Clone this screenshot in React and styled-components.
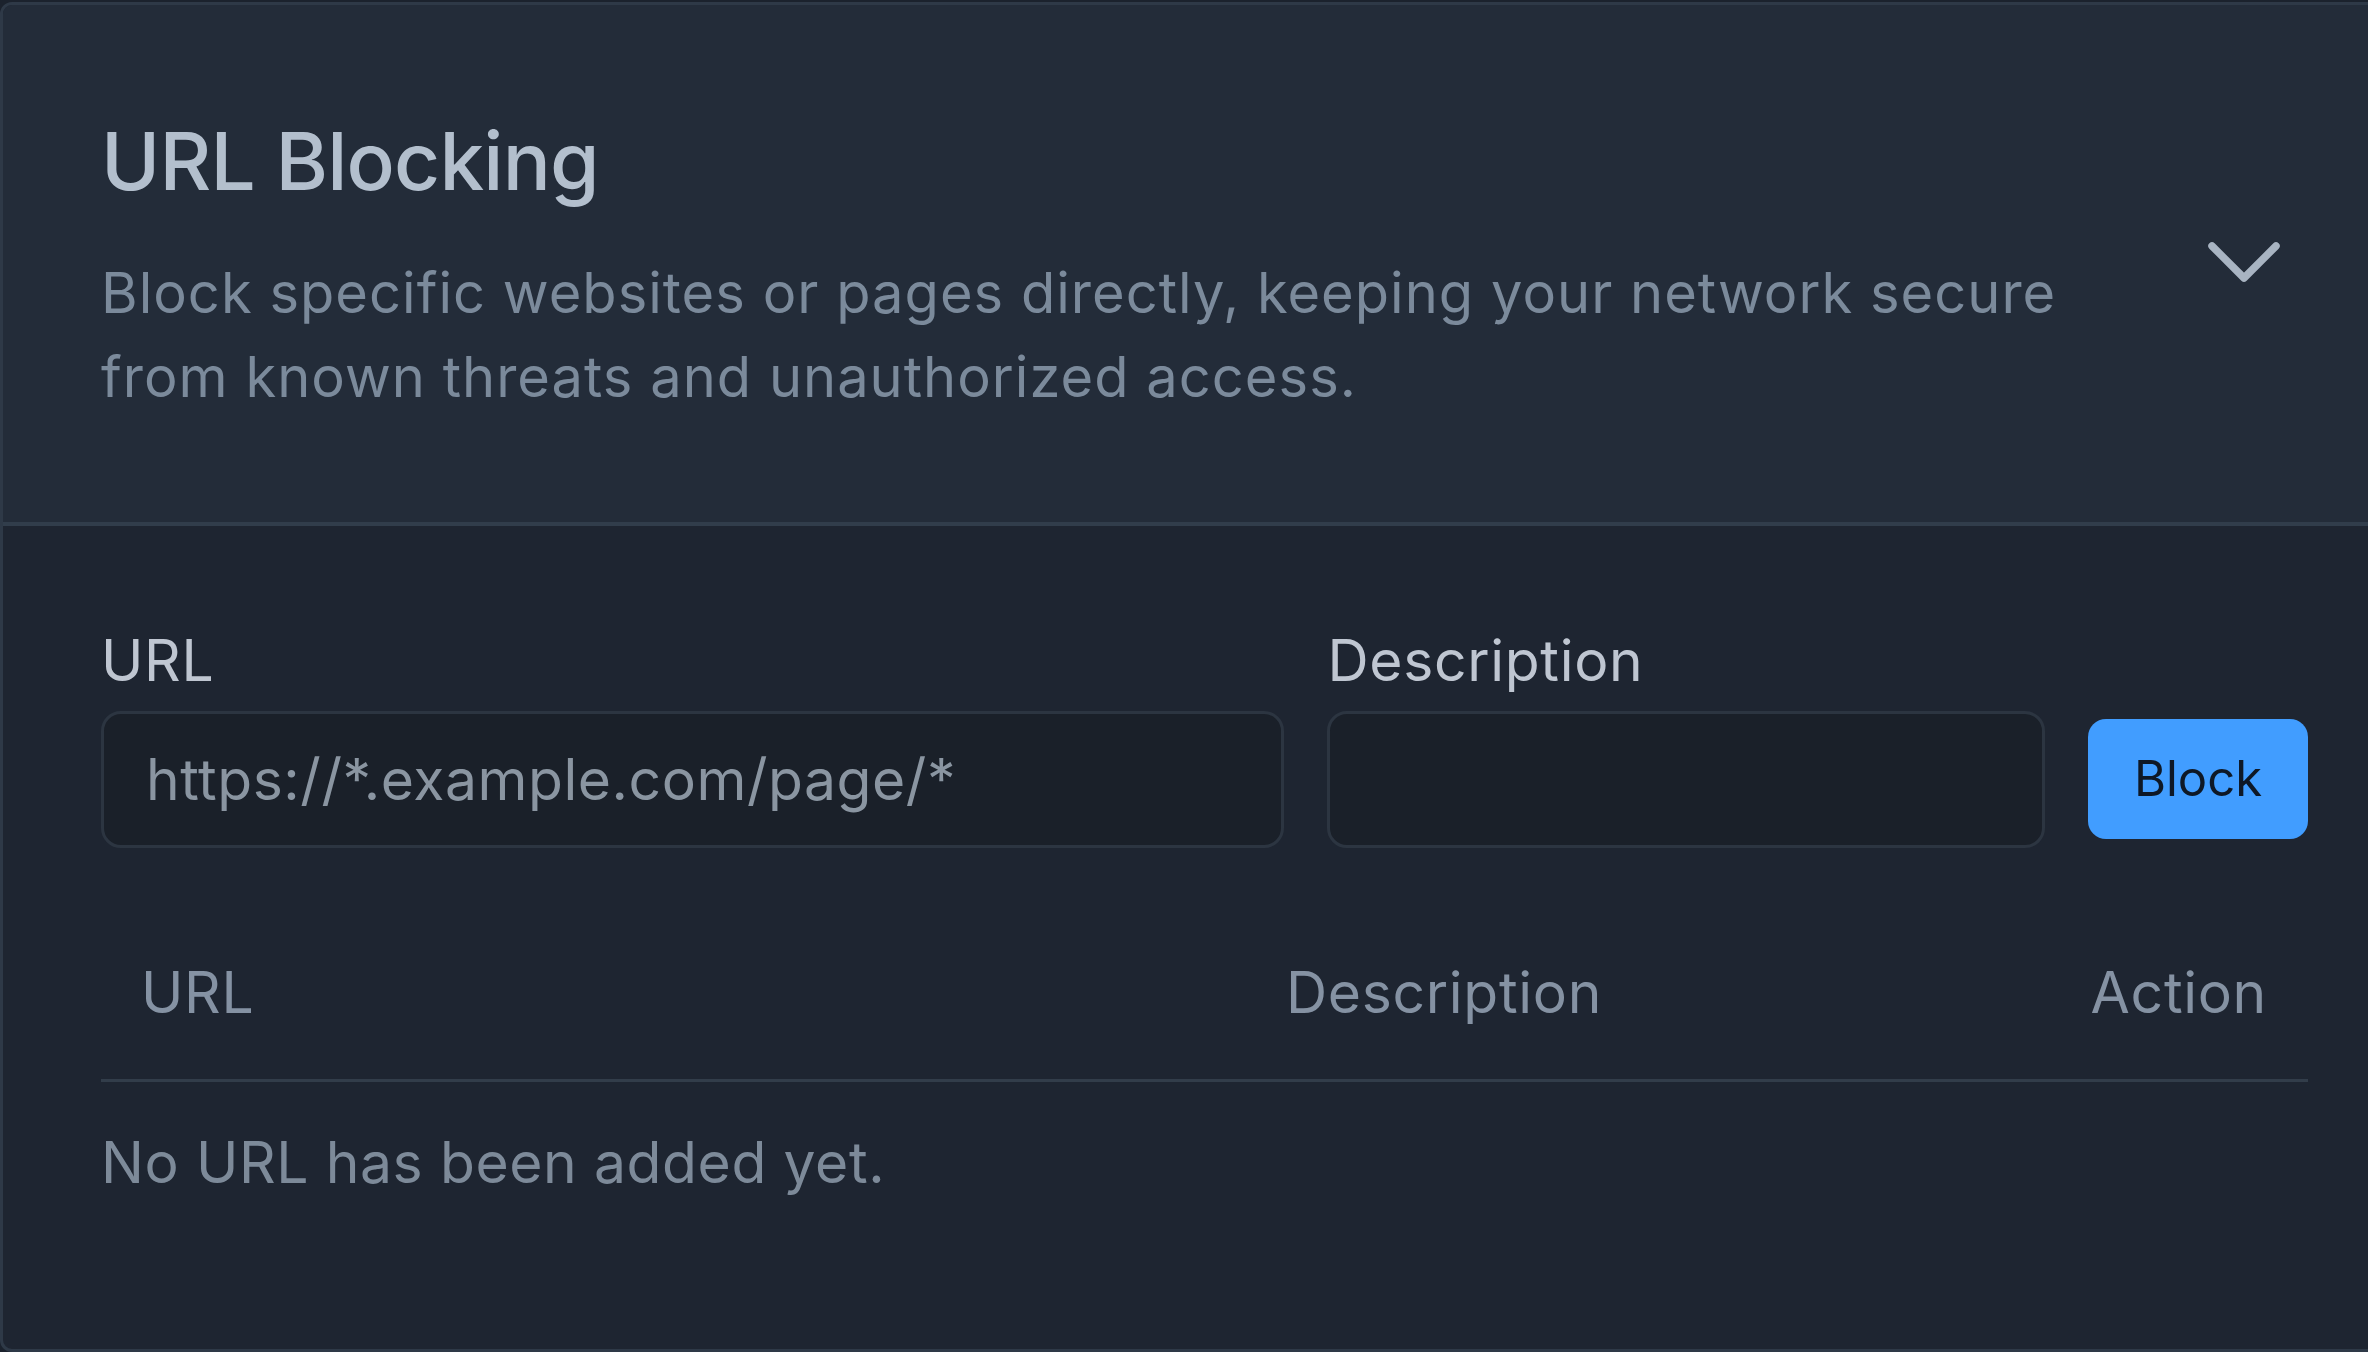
import React from "react";
import styled, { createGlobalStyle } from "styled-components";

const Global = createGlobalStyle`
  html, body {
    margin: 0;
    padding: 0;
    background: #1b222d;
    overflow: hidden;
  }
  body {
    font-family: Inter, "Noto Sans", "Liberation Sans", sans-serif;
  }
  * { box-sizing: border-box; }
`;

const Card = styled.section`
  margin-top: 2px;
  width: 2410px;
  height: 1350px;
  border: 3px solid #2e3947;
  border-radius: 12px;
  overflow: hidden;
  display: flex;
  flex-direction: column;
  background: #1e2531;
`;

const Header = styled.header`
  background: #232c39;
  border-bottom: 4px solid #313d4b;
  padding: 108px 99px 103px 98px;
  display: grid;
  grid-template-columns: 1fr 128px;
  column-gap: 60px;
  align-items: center;
`;

const HeaderText = styled.div`
  display: flex;
  flex-direction: column;
  gap: 42px;
`;

const Title = styled.h2`
  margin: 0;
  font-size: 80px;
  line-height: 96px;
  font-weight: 500;
  letter-spacing: -0.8px;
  color: #b3bfcd;
`;

const Subtitle = styled.p`
  margin: 0;
  font-size: 56px;
  line-height: 84px;
  font-weight: 400;
  letter-spacing: 1.03px;
  color: #7b8a9b;
`;

const ToggleButton = styled.button`
  width: 128px;
  height: 100px;
  padding: 0;
  border: none;
  background: transparent;
  display: flex;
  align-items: center;
  justify-content: center;
  cursor: pointer;
  margin-top: -8px;
`;

const Body = styled.div`
  flex: 1;
  padding: 92px 99px 0 98px;
`;

const FormGrid = styled.div`
  display: grid;
  grid-template-columns: 1184fr 718fr 220px;
  column-gap: 43px;
  row-gap: 8px;
  align-items: center;
`;

const Label = styled.label`
  font-size: 57px;
  line-height: 85px;
  letter-spacing: 0.7px;
  color: #bfc6d1;
  grid-column: ${(p) => p.$col};
`;

const Input = styled.input`
  width: 100%;
  height: 137px;
  border: 3px solid #2c3541;
  border-radius: 20px;
  background: #1a2029;
  padding: 0 40px 0 42px;
  font-family: inherit;
  font-size: 57px;
  letter-spacing: 0.55px;
  color: #c8ced6;
  outline: none;
  &::placeholder {
    color: #8a95a1;
    opacity: 1;
  }
`;

const BlockButton = styled.button`
  width: 220px;
  height: 120px;
  border: none;
  border-radius: 18px;
  background: #419dff;
  color: #0e1826;
  font-family: inherit;
  font-size: 49px;
  font-weight: 400;
  cursor: pointer;
  margin-top: -2px;
`;

const Table = styled.div`
  margin-top: 58px;
`;

const HeadRow = styled.div`
  display: grid;
  grid-template-columns: 1145px 1fr auto;
  border-bottom: 3px solid #323d4a;
`;

const HeadCell = styled.div`
  padding: 44px 41px 44px 40px;
  font-size: 57px;
  line-height: 85px;
  letter-spacing: 0.7px;
  color: #8592a3;
  text-align: ${(p) => p.$align || "left"};
`;

const Empty = styled.p`
  margin: 38px 0 0;
  font-size: 57px;
  line-height: 85px;
  letter-spacing: 0.6px;
  color: #7d8a99;
`;

const Chevron = () => (
  <svg width="76" height="44" viewBox="0 0 76 44" fill="none">
    <polyline
      points="6,6 38,38 70,6"
      stroke="#a8b4c2"
      strokeWidth="7.5"
      strokeLinecap="round"
      strokeLinejoin="round"
    />
  </svg>
);

export default function App() {
  return (
    <>
      <Global />
      <Card>
        <Header>
          <HeaderText>
            <Title>URL Blocking</Title>
            <Subtitle>
              Block specific websites or pages directly, keeping your network
              secure from known threats and unauthorized access.
            </Subtitle>
          </HeaderText>
          <ToggleButton aria-label="Collapse">
            <Chevron />
          </ToggleButton>
        </Header>
        <Body>
          <FormGrid>
            <Label $col="1">URL</Label>
            <Label $col="2 / span 2">Description</Label>
            <Input placeholder="https://*.example.com/page/*" />
            <Input />
            <BlockButton>Block</BlockButton>
          </FormGrid>
          <Table>
            <HeadRow>
              <HeadCell>URL</HeadCell>
              <HeadCell>Description</HeadCell>
              <HeadCell $align="right">Action</HeadCell>
            </HeadRow>
          </Table>
          <Empty>No URL has been added yet.</Empty>
        </Body>
      </Card>
    </>
  );
}
